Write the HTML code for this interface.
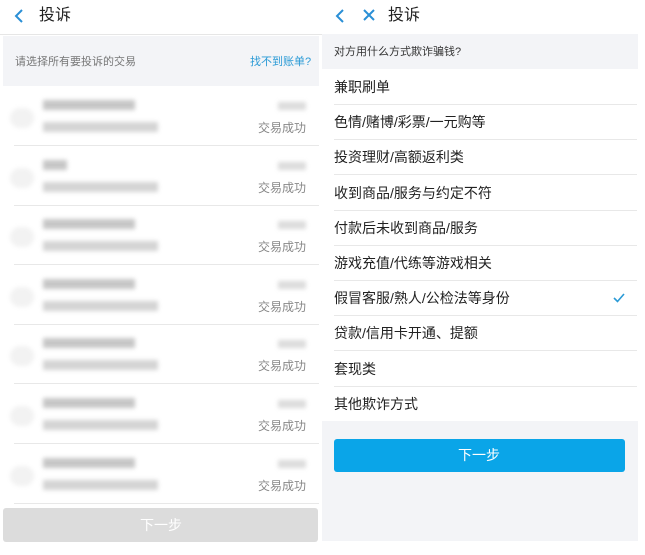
<!DOCTYPE html>
<html><head><meta charset="utf-8"><style>
*{margin:0;padding:0;box-sizing:border-box}
body{width:645px;height:555px;background:#fff;position:relative;overflow:hidden;font-family:"Liberation Sans","Noto Sans CJK SC",sans-serif;color:#222}
.a{position:absolute;white-space:nowrap}
.blur{position:absolute;background:#b8b8b8;filter:blur(2px);opacity:.8}
.sep{position:absolute;height:1px;background:#e8e8e8}
.item{position:absolute;left:334px;font-size:14px;color:#222;line-height:20px}
</style></head><body>
<!-- Left panel -->
<svg class="a" style="left:13px;top:8px" width="12" height="16"><path d="M9 2 L3 8 L9 14" stroke="#2a8fd6" stroke-width="2" fill="none"/></svg>
<div class="a" style="left:39px;top:5px;font-size:16px;line-height:22px">投诉</div>
<div class="a" style="left:0;top:34px;width:322px;height:1px;background:#e6e6e6"></div>
<div class="a" style="left:3px;top:36px;width:316px;height:50px;background:#f3f4f7"></div>
<div class="a" style="left:15px;top:54px;font-size:11px;color:#777;line-height:16px">请选择所有要投诉的交易</div>
<div class="a" style="left:250px;top:54px;font-size:11px;color:#2a9ad6;line-height:16px">找不到账单?</div>
<div id="rows"></div>
<div class="a" style="left:3px;top:508px;width:315px;height:34px;background:#dcdcdc;border-radius:3px"></div>
<div class="a" style="left:140px;top:515px;font-size:14px;color:#fff;line-height:20px">下一步</div>
<!-- Right panel -->
<svg class="a" style="left:334px;top:8px" width="12" height="16"><path d="M9 2 L3 8 L9 14" stroke="#2a8fd6" stroke-width="2" fill="none"/></svg>
<svg class="a" style="left:362px;top:8px" width="14" height="14"><path d="M2 2 L12 12 M12 2 L2 12" stroke="#2a8fd6" stroke-width="2" fill="none"/></svg>
<div class="a" style="left:388px;top:5px;font-size:16px;line-height:22px">投诉</div>
<div class="a" style="left:322px;top:34px;width:316px;height:35px;background:#f3f4f7"></div>
<div class="a" style="left:334px;top:44px;font-size:11px;color:#333;line-height:16px">对方用什么方式欺诈骗钱?</div>
<div class="a" style="left:322px;top:421px;width:316px;height:120px;background:#f3f4f7"></div>
<div class="a" style="left:334px;top:439px;width:291px;height:33px;background:#0aa5e8;border-radius:3px"></div>
<div class="a" style="left:458px;top:445px;font-size:14px;color:#fff;line-height:20px">下一步</div>
<svg class="a" style="left:612px;top:292px" width="14" height="12"><path d="M2 6 L5.5 9.5 L12 2" stroke="#2a9ad6" stroke-width="1.6" fill="none"/></svg>
<div id="items"></div>
<script>
var r='';
for(var i=0;i<7;i++){var t=86+59.6*i;
r+='<div class="a" style="left:10px;top:'+(t+22)+'px;width:24px;height:20px;border-radius:10px;background:#f2f2f2;filter:blur(2px)"></div>';
r+='<div class="blur" style="left:43px;top:'+(t+14)+'px;width:'+(i==1?24:92)+'px;height:10px"></div>';
r+='<div class="blur" style="left:43px;top:'+(t+36)+'px;width:115px;height:10px;opacity:.6"></div>';
r+='<div class="blur" style="left:278px;top:'+(t+16)+'px;width:28px;height:8px;opacity:.5"></div>';
r+='<div class="a" style="left:258px;top:'+(t+34)+'px;font-size:12px;color:#888;line-height:17px">交易成功</div>';
r+='<div class="sep" style="left:14px;top:'+(t+59)+'px;width:305px"></div>';}
document.getElementById('rows').innerHTML=r;
var it=['兼职刷单','色情/赌博/彩票/一元购等','投资理财/高额返利类','收到商品/服务与约定不符','付款后未收到商品/服务','游戏充值/代练等游戏相关','假冒客服/熟人/公检法等身份','贷款/信用卡开通、提额','套现类','其他欺诈方式'];
var s='';
for(var j=0;j<10;j++){var c=87+35.2*j;
s+='<div class="item" style="top:'+(c-10)+'px">'+it[j]+'</div>';
if(j<9)s+='<div class="sep" style="left:334px;top:'+(c+17)+'px;width:303px"></div>';}
document.getElementById('items').innerHTML=s;
</script>
</body></html>
